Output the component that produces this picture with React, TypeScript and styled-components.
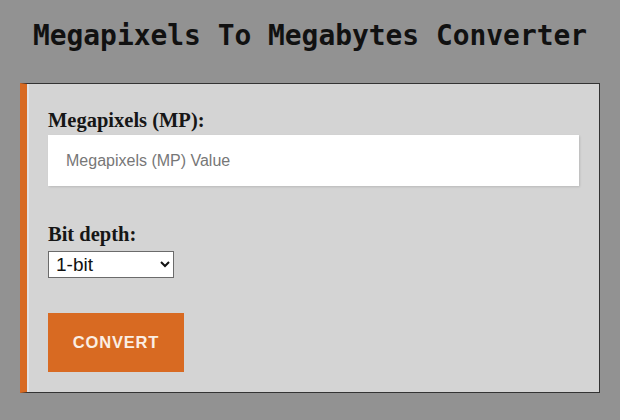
import React from "react";
import styled, { createGlobalStyle } from "styled-components";

const Global = createGlobalStyle`
  html, body { margin: 0; padding: 0; background: #929292; }
  body { font-family: "Liberation Sans", Arial, sans-serif; }
`;

const Page = styled.div`
  width: 620px;
  height: 420px;
  padding-top: 21px;
  box-sizing: border-box;
`;

const Title = styled.h1`
  margin: 0 0 32px;
  text-align: center;
  font-family: "DejaVu Sans Mono", "Liberation Mono", monospace;
  font-weight: bold;
  font-size: 27.9px;
  line-height: 30px;
  color: #111;
`;

const Panel = styled.form`
  margin: 0 20px;
  height: 310px;
  box-sizing: border-box;
  background: #d4d4d4;
  border: 1px solid #333;
  border-left: 7px solid #d86a22;
  box-shadow: inset 2px 0 0 #e2e2e2;
  padding: 26px 20px 0 21px;
  display: flex;
  flex-direction: column;
  align-items: flex-start;
`;

const Label = styled.label<{ $top?: number }>`
  display: block;
  margin-top: ${(p) => p.$top ?? 0}px;
  font-family: "Liberation Serif", "Times New Roman", serif;
  font-weight: bold;
  font-size: 20.5px;
  line-height: 20px;
  color: #161616;
`;

const Input = styled.input`
  margin-top: 5px;
  width: 100%;
  height: 51px;
  box-sizing: border-box;
  border: none;
  outline: none;
  background: #fff;
  padding: 0 18px;
  font-family: "Liberation Sans", Arial, sans-serif;
  font-size: 16px;
  color: #333;
  box-shadow: 1px 1px 2px rgba(0, 0, 0, 0.12);
  &::placeholder { color: #777; }
`;

const Select = styled.select`
  margin-top: 7px;
  width: 126px;
  height: 27px;
  box-sizing: border-box;
  border: 1px solid #6b6b6b;
  border-radius: 0;
  background: #fff;
  font-family: "Liberation Sans", Arial, sans-serif;
  font-size: 19px;
  color: #111;
  padding: 0 0 0 3px;
`;

const Button = styled.button`
  margin-top: 35px;
  width: 136px;
  height: 59px;
  border: none;
  background: #d86a22;
  color: #fbeee4;
  font-family: "Liberation Sans", Arial, sans-serif;
  font-weight: bold;
  font-size: 16.5px;
  letter-spacing: 0.8px;
  cursor: pointer;
`;

export default function App() {
  return (
    <>
      <Global />
      <Page>
        <Title>Megapixels To Megabytes Converter</Title>
        <Panel onSubmit={(e) => e.preventDefault()}>
          <Label htmlFor="mp">Megapixels (MP):</Label>
          <Input id="mp" type="text" placeholder="Megapixels (MP) Value" />
          <Label htmlFor="bd" $top={38}>Bit depth:</Label>
          <Select id="bd" defaultValue="1">
            <option value="1">1-bit</option>
            <option value="8">8-bit</option>
            <option value="16">16-bit</option>
            <option value="24">24-bit</option>
            <option value="32">32-bit</option>
          </Select>
          <Button type="submit">CONVERT</Button>
        </Panel>
      </Page>
    </>
  );
}
